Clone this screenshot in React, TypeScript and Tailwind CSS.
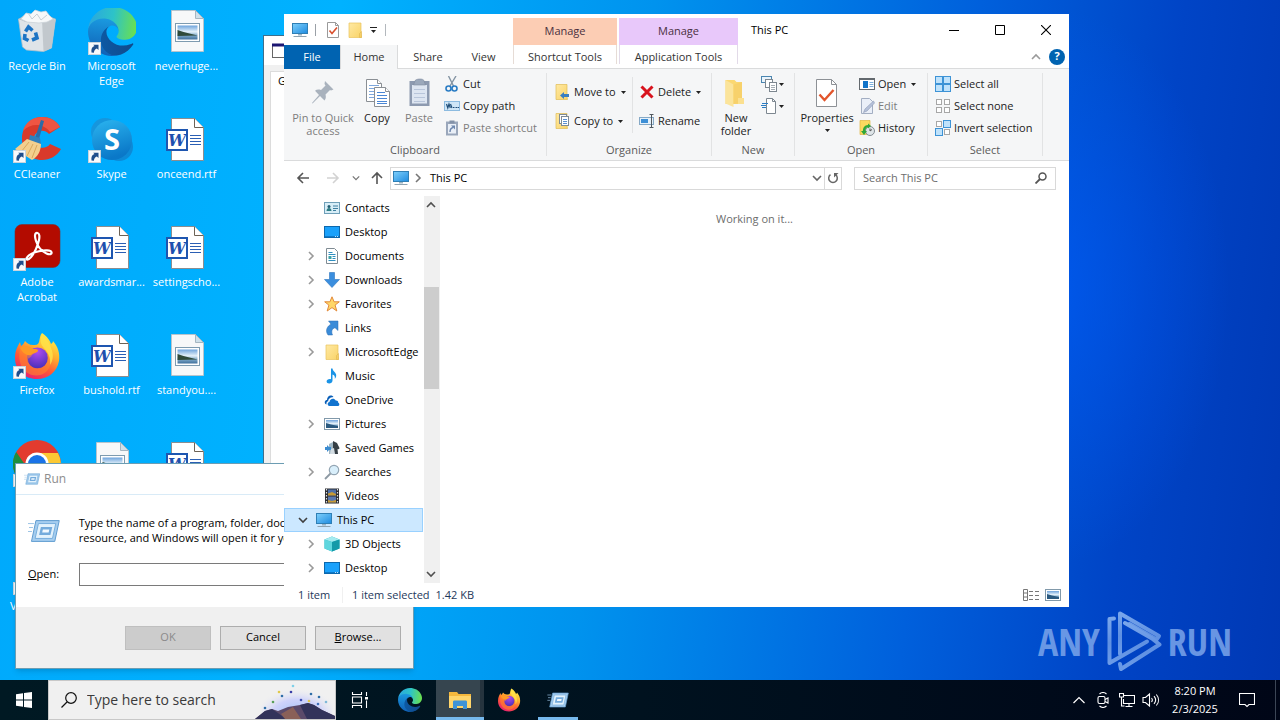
import type { ReactNode } from 'react';

type IconProps = { className?: string };

/* ---------- shared gradients ---------- */

function Gradients() {
  return (
    <svg className="absolute h-0 w-0" aria-hidden="true">
      <defs>
        <linearGradient id="edgeTop" x1="0" y1="0.4" x2="1" y2="0.5">
          <stop offset="0" stopColor="#2aa6e0" />
          <stop offset="0.5" stopColor="#2dc3c8" />
          <stop offset="1" stopColor="#6be04e" />
        </linearGradient>
        <linearGradient id="edgeMid" x1="0.5" y1="0" x2="0.4" y2="1">
          <stop offset="0" stopColor="#1b9de2" />
          <stop offset="1" stopColor="#0f5fb5" />
        </linearGradient>
        <linearGradient id="edgeLow" x1="0" y1="0.5" x2="1" y2="0.5">
          <stop offset="0" stopColor="#0c59a4" />
          <stop offset="1" stopColor="#114a8b" />
        </linearGradient>
        <linearGradient id="foxBody" x1="0.8" y1="0.05" x2="0.3" y2="1">
          <stop offset="0" stopColor="#fff04a" />
          <stop offset="0.35" stopColor="#ffb02e" />
          <stop offset="0.65" stopColor="#ff5a36" />
          <stop offset="1" stopColor="#e81f72" />
        </linearGradient>
        <radialGradient id="foxGlobe" cx="0.5" cy="0.2" r="0.8">
          <stop offset="0" stopColor="#b04bf0" />
          <stop offset="1" stopColor="#4a2fb8" />
        </radialGradient>
        <linearGradient id="screenBlue" x1="0" y1="0" x2="1" y2="1">
          <stop offset="0" stopColor="#7fd0fb" />
          <stop offset="1" stopColor="#1e8be0" />
        </linearGradient>
        <linearGradient id="skypeBlue" x1="0" y1="0" x2="0.3" y2="1">
          <stop offset="0" stopColor="#2bb5f0" />
          <stop offset="1" stopColor="#0a78c8" />
        </linearGradient>
        <linearGradient id="folderYellow" x1="0" y1="0" x2="1" y2="1">
          <stop offset="0" stopColor="#ffe9a3" />
          <stop offset="1" stopColor="#f9d367" />
        </linearGradient>
        <linearGradient id="photo" x1="0" y1="0" x2="0" y2="1">
          <stop offset="0" stopColor="#6ea3dc" />
          <stop offset="0.45" stopColor="#e4f1fa" />
          <stop offset="0.7" stopColor="#7fa9c9" />
          <stop offset="1" stopColor="#3f6f9c" />
        </linearGradient>
        <linearGradient id="markFade" x1="0" y1="0" x2="0" y2="1">
          <stop offset="0" stopColor="#8fb8f2" />
          <stop offset="0.55" stopColor="#6f9ee8" />
          <stop offset="1" stopColor="#7fabee" />
        </linearGradient>
        <radialGradient id="skyGlow" cx="0.5" cy="0.7" r="0.6">
          <stop offset="0" stopColor="#9fc0f5" />
          <stop offset="0.6" stopColor="#cfd3fa" />
          <stop offset="1" stopColor="#f0f0f0" stopOpacity="0" />
        </radialGradient>
      </defs>
    </svg>
  );
}

/* ---------- desktop icons ---------- */

function ShortcutArrow() {
  return (
    <g>
      <rect x="0.5" y="34.5" width="12" height="12" fill="#f7f9fb" stroke="#c9d4dd" />
      <path d="M3.500 44.500c-.6-3.600.8-5.900 3-6.400l-1.300-1.400h5.300v5.200l-1.600-1.500c-1.700.6-2.900 1.800-3 4.300z" fill="#1f4e8c" />
    </g>
  );
}

function RecycleBinIcon() {
  return (
    <svg viewBox="0 0 48 48" className="h-12 w-12">
      <path d="M5.500 11h37l-4 29-8 3.500-17-1.500-4-3z" fill="#dfe4e8" stroke="#b4bfc8" strokeWidth=".8" />
      <path d="M29 12h13.500l-4 28-8 3.500z" fill="#c2c8cd" />
      <path d="M5.500 11l7 3 16 1 14-4-8-4-22-.5z" fill="#b9c2c9" />
      <path d="M8 11l5-6 5 1 4-4 6 2 5-1 3 4 4 4-6 3-8 1-12-1z" fill="#f6f8f9" stroke="#cbd2d8" strokeWidth=".7" />
      <path d="M15 5l4 6 5-5 4 6 6-5" fill="none" stroke="#c7cfd5" />
      <g fill="none" stroke="#1c74c4" strokeWidth="3.600">
        <path d="M12.500 23.500l3-4.500 4 3.500" />
        <path d="M22.500 24.500l1.500 5.500-5 2" />
        <path d="M15.500 32.500l-4-2 .5-4.500" />
      </g>
    </svg>
  );
}

function EdgeShape() {
  return (
    <>
      <path fill="url(#edgeLow)" d="M231 190.500c-3.400 1.800-6.900 3.400-10.500 4.700-11.500 4.300-23.600 6.500-35.900 6.500-47.300 0-88.500-32.500-88.500-74.300.1-11.400 6.400-21.900 16.400-27.300-42.800 1.800-53.800 46.400-53.800 72.500 0 73.900 68.100 81.400 82.800 81.400 7.900 0 19.800-2.300 27-4.600l1.300-.4c27.600-9.500 51-28.100 66.600-52.800 1.200-1.900.6-4.300-1.200-5.500-1.300-.8-2.900-.9-4.200-.2z" />
      <path fill="url(#edgeMid)" d="M105.700 241.400c-8.900-5.500-16.600-12.800-22.700-21.300-26.300-36-18.400-86.500 17.600-112.800 3.800-2.700 7.700-5.200 11.900-7.200 3.100-1.500 8.400-4.100 15.500-4 10.100.1 19.600 4.900 25.700 13 4 5.400 6.300 11.900 6.400 18.700 0-.2 24.500-79.600-80-79.600-43.900 0-80 41.700-80 78.200-.2 19.300 4 38.500 12.100 56 27.600 58.800 94.800 87.600 156.400 67.100-21.100 6.600-44.100 3.700-62.900-8.100z" />
      <path fill="url(#edgeTop)" d="M152.300 148.900c-.8 1-3.300 2.500-3.300 5.700 0 2.600 1.700 5.100 4.700 7.200 14.400 10 41.500 8.700 41.600 8.700 10.700 0 21.100-2.900 30.300-8.300 18.800-11 30.400-31.100 30.400-52.900.3-22.400-8-37.300-11.300-43.900C223.500 23.900 177.700 0 128 0 58 0 1 56.200 0 126.200c.5-36.500 36.800-66 80-66 3.500 0 23.500.3 42 10.100 16.300 8.600 24.900 18.900 30.800 29.200 6.200 10.700 7.300 24.100 7.300 29.500 0 5.300-2.700 13.300-7.800 19.900z" />
    </>
  );
}

function EdgeDesktopIcon() {
  return (
    <svg viewBox="0 0 48 48" className="h-12 w-12">
      <svg x="0" y="-1" width="49" height="49" viewBox="0 0 256 256">
        <EdgeShape />
      </svg>
      <ShortcutArrow />
    </svg>
  );
}

function ImageFileIcon() {
  return (
    <svg viewBox="0 0 48 48" className="h-12 w-12">
      <path d="M8.500 2.500h24l8 8v33h-32z" fill="#f7f8f9" stroke="#b7c4cd" />
      <path d="M32.500 2.500v8h8z" fill="#cfe0ea" stroke="#a5b6c1" />
      <rect x="12.500" y="15.500" width="24" height="18" fill="#fff" stroke="#7e9bb0" />
      <rect x="14.500" y="17.500" width="20" height="14" fill="url(#photo)" />
      <path d="M14.500 22l6 2 14 3.500-20 .5z" fill="#2f4a3a" />
    </svg>
  );
}

function WordFileIcon() {
  return (
    <svg viewBox="0 0 48 48" className="h-12 w-12">
      <path d="M8.500 2.500h23l9 9v33h-32z" fill="#fff" stroke="#8b8d90" />
      <path d="M31.500 2.500v9h9" fill="#fff" stroke="#6c6256" />
      <path d="M27 19.500h11M27 22.500h11M27 25.500h11M27 28.500h11" stroke="#2b5fb4" />
      <rect x="4" y="14" width="20" height="20" fill="#fff" stroke="#1e56b0" strokeWidth="2" />
      <text x="14" y="30" textAnchor="middle" fontFamily="DejaVu Serif, Liberation Serif, serif" fontWeight="700" fontStyle="italic" fontSize="16" fill="#1e4fae">W</text>
    </svg>
  );
}

function CCleanerIcon() {
  return (
    <svg viewBox="0 0 48 48" className="h-12 w-12">
      <path d="M47 11C43 4 36 1 29 1 17 1 9 11 9 23c0 12 8 21 20 21 8 0 15-4 19-11l-11-5c-4 6-15 5-16-4-1-8 9-13 15-6z" fill="#d93a2b" />
      <path d="M47 11C43 4 36 1 29 1 19 1 12 7 10 15c8-8 20-8 27 1z" fill="#ef5543" />
      <path d="M28 4l3 1-5 18-4-1z" fill="#2c6ca8" />
      <path d="M17 19l10 3 1 7-12-4z" fill="#2f7fbc" />
      <path d="M14 23l14 5c0 6-3 13-9 16L2 33z" fill="#f3cf8e" />
      <path d="M16 26l-8 10M20 28l-6 12M24 29l-5 13" stroke="#d9a85c" />
      <ShortcutArrow />
    </svg>
  );
}

function SkypeIcon() {
  return (
    <svg viewBox="0 0 48 48" className="h-12 w-12">
      <circle cx="17" cy="16" r="14" fill="#1696dd" />
      <circle cx="31" cy="31" r="14" fill="#0d8ad6" />
      <circle cx="24" cy="24" r="20" fill="url(#skypeBlue)" />
      <text x="24" y="34" textAnchor="middle" fontFamily="Open Sans, Noto Sans, sans-serif" fontWeight="700" fontSize="29" fill="#fff">S</text>
      <ShortcutArrow />
    </svg>
  );
}

function AcrobatIcon() {
  return (
    <svg viewBox="0 0 48 48" className="h-12 w-12">
      <rect x="2" y="0.500" width="45" height="43" rx="7" fill="#b30b00" stroke="#7d2b2b" strokeWidth=".6" />
      <path d="M24.500 9c-3-.5-3 3.500-1.500 8 1.800 5.500 6 10.500 10.500 12.500 3.500 1.500 5.500.5 5-1.200-.7-2.400-7-2.300-12.500-1-5.500 1.200-11 4-12.300 6.700-.8 2 1.500 2.500 4-.6C21.500 29.500 25 21 26 16c.8-4 .3-6.700-1.500-7z" fill="none" stroke="#fff" strokeWidth="2.200" />
      <ShortcutArrow />
    </svg>
  );
}

function FirefoxShape() {
  return (
    <>
      <path d="M29 1c6 4 8 8 9 11 2-1 2-3 2-3 5 6 7 12 6 20-2 11-11 18-22 18C11 47 2 38 2 26 2 18 5 14 7 10l1 4c2-1 3-3 4-5 2 2 4 4 8 4 3 0 5 0 6-3 1-4 1-7 3-9z" fill="url(#foxBody)" />
      <circle cx="24.500" cy="26" r="10.500" fill="url(#foxGlobe)" />
      <path d="M7 17c5-4 10-2 13 0 3 0 5 1 5 2-1 2-4 2-6 4-1 3-4 3-4 4 0 6 5 10 11 9 7-1 10-7 8-14 4 4 4 10 2 14-4 8-15 10-23 4-6-5-8-14-6-23z" fill="#ff8a2a" fillOpacity=".55" />
      <path d="M7 16c5-4 10-1 13 1 3 0 5 0 5 2-2 2-5 2-7 4-3 1-7-1-9-4z" fill="#ff9a24" />
      <path d="M29 3c6 5 8 9 9 13 3 6 2 13-1 17 1-8-2-13-7-18-3-4-3-8-1-12z" fill="#ffe34a" fillOpacity=".8" />
    </>
  );
}

function FirefoxDesktopIcon() {
  return (
    <svg viewBox="0 0 48 48" className="h-12 w-12">
      <FirefoxShape />
      <ShortcutArrow />
    </svg>
  );
}

function ChromeIcon() {
  return (
    <svg viewBox="0 0 48 48" className="h-12 w-12">
      <circle cx="24" cy="24" r="24" fill="#e33b2e" />
      <path d="M24 24h24A24 24 0 0 1 22 48z" fill="#fcc934" />
      <path d="M45 13H24v11h24a24 24 0 0 0-3-11z" fill="#fcc934" />
      <path d="M3.200 12A24 24 0 0 0 24 48l9-19-18 0z" fill="#1e8e3e" />
      <circle cx="24" cy="24" r="11.500" fill="#fff" />
      <circle cx="24" cy="24" r="9" fill="#1a73e8" />
      <ShortcutArrow />
    </svg>
  );
}

function VlcIcon() {
  return (
    <svg viewBox="0 0 48 48" className="h-12 w-12">
      <path d="M21 4h6l10 32H11z" fill="#f58220" />
      <path d="M6 36h36l3 8H3z" fill="#f58220" />
      <ShortcutArrow />
    </svg>
  );
}

/* ---------- 16px icons ---------- */

function PcIcon({ className = 'h-4 w-4' }: IconProps) {
  return (
    <svg viewBox="0 0 16 16" className={className}>
      <rect x="0.500" y="1.500" width="15" height="10" fill="url(#screenBlue)" stroke="#2f7fb5" />
      <path d="M6 12h4v1.500H6z" fill="#9cb3c2" />
      <path d="M1.500 14.500h13" stroke="#8fa3b0" />
    </svg>
  );
}

function FolderIcon({ className = 'h-4 w-4' }: IconProps) {
  return (
    <svg viewBox="0 0 16 16" className={className}>
      <path d="M2 1h12v11l.5 3.500H2z" fill="url(#folderYellow)" stroke="#e9c35c" strokeWidth=".7" />
      <path d="M12.500 15.500v-4l2-2v6z" fill="#f5cf66" stroke="#dcb14a" strokeWidth=".5" />
    </svg>
  );
}

function CheckDocIcon({ className = 'h-4 w-4' }: IconProps) {
  return (
    <svg viewBox="0 0 16 16" className={className}>
      <path d="M2.500.5h8l3 3v12h-11z" fill="#fff" stroke="#9a9a9a" />
      <path d="M10.500.5v3h3" fill="none" stroke="#9a9a9a" />
      <path d="M4.500 8.500l2.500 3 5-6" fill="none" stroke="#d9502e" strokeWidth="1.600" />
    </svg>
  );
}

function DesktopIcon() {
  return (
    <svg viewBox="0 0 16 16" className="h-4 w-4">
      <rect x="0.500" y="2.500" width="15" height="11" fill="#1aa1fb" stroke="#0c68ad" />
      <path d="M1 12.500h14" stroke="#0d78c8" />
      <path d="M11 12.500h3" stroke="#bfe3fb" strokeDasharray="1 1" />
    </svg>
  );
}

function ContactsIcon() {
  return (
    <svg viewBox="0 0 16 16" className="h-4 w-4">
      <rect x="0.500" y="2.500" width="15" height="11" fill="#d7edf7" stroke="#6f9fb8" />
      <circle cx="5" cy="6.500" r="1.500" fill="#1f5d72" />
      <path d="M2.500 11c0-4 5-4 5 0z" fill="#2d7d83" />
      <path d="M9 6h5M9 8.500h5M9 10.500h3" stroke="#3f7fa0" />
    </svg>
  );
}

function DocumentsIcon() {
  return (
    <svg viewBox="0 0 16 16" className="h-4 w-4">
      <path d="M2.500.5h8l3 3v12h-11z" fill="#fff" stroke="#7f8b93" />
      <path d="M4.500 4.500h4M4.500 6.500h7M4.500 12.500h7M8.500 8.500h3M8.500 10.500h3" stroke="#2f8fc0" />
      <path d="M4.500 8h3v3h-3z" fill="#3aa3a8" />
    </svg>
  );
}

function DownloadsIcon() {
  return (
    <svg viewBox="0 0 16 16" className="h-4 w-4">
      <path d="M5.500.5h5v7h5L8 15.500.5 7.500h5z" fill="#3b8ede" stroke="#2c76c0" strokeWidth=".6" />
    </svg>
  );
}

function StarIcon() {
  return (
    <svg viewBox="0 0 16 16" className="h-4 w-4">
      <path d="M8 .8l2.100 5h5.200l-4.200 3.300 1.700 5.900L8 11.600 3.200 15l1.700-5.900L.7 5.800h5.200z" fill="#ffd768" stroke="#e2893a" />
    </svg>
  );
}

function LinksIcon() {
  return (
    <svg viewBox="0 0 16 16" className="h-4 w-4">
      <path d="M4.500 1h9.500v9.500l-3-2.800c-3 1-4 3.300-2.500 7.300H4C.8 10.500 3.300 6 7 4.200z" fill="#3a8bd8" stroke="#2a6fb4" strokeWidth=".5" />
    </svg>
  );
}

function MusicIcon() {
  return (
    <svg viewBox="0 0 16 16" className="h-4 w-4">
      <path d="M7 .5h1.500c.3 3 4 4 3.700 7.200-.1 1.400-.7 2.300-1.400 3 .5-2.500-.8-3.800-2.300-4.200v6c0 2-1.600 3-3.300 3-1.500 0-2.600-.8-2.600-2 0-1.700 2.100-2.900 4.400-2.300z" fill="#1a93e6" />
    </svg>
  );
}

function OneDriveIcon() {
  return (
    <svg viewBox="0 0 16 16" className="h-4 w-4">
      <path d="M1.500 12c-1.500-1.500-.5-4 1.500-4C3 4 7 2 9.500 5c-4 0-5.500 3-5.200 4.200C2.800 9.500 2.200 10.500 2.500 12.500z" fill="#0a5fb8" />
      <path d="M5.500 14c-2.300 0-2.500-3.800 0-4 0-3.500 4.700-4.600 6.200-1.600 2-.2 2.800 1.300 2.500 2.300 1.700.5 1.500 3.300-.4 3.300z" fill="#1173cf" />
    </svg>
  );
}

function PicturesIcon() {
  return (
    <svg viewBox="0 0 16 16" className="h-4 w-4">
      <rect x="0.500" y="2.500" width="15" height="11" fill="#fff" stroke="#8199aa" />
      <rect x="2" y="4" width="12" height="8" fill="url(#photo)" />
      <path d="M2 7l5 1.500 7 1.500v2H2z" fill="#2b5a80" />
    </svg>
  );
}

function SavedGamesIcon() {
  return (
    <svg viewBox="0 0 16 16" className="h-4 w-4">
      <path d="M9 1l4 2 2.500 5c0 1-1 1.500-2 1l.5 5H9z" fill="#363f45" />
      <path d="M5 4l4-2v12H5z" fill="#9fb6c4" />
      <path d="M1 7h2V5l2 2h2v3H5l-2 2v-2H1z" fill="#3c8cd0" />
      <path d="M6 14l1-5 3-1 1 6z" fill="#d4dde3" />
    </svg>
  );
}

function SearchesIcon() {
  return (
    <svg viewBox="0 0 16 16" className="h-4 w-4">
      <circle cx="10" cy="6" r="4.700" fill="#d9effb" stroke="#93a5b3" strokeWidth="1.200" />
      <path d="M6.500 9.500L1 15" stroke="#8d99a3" strokeWidth="1.800" />
    </svg>
  );
}

function VideosIcon() {
  return (
    <svg viewBox="0 0 16 16" className="h-4 w-4">
      <rect x="1" y="0.500" width="14" height="15" fill="#2b2c31" />
      <rect x="4" y="1.500" width="8" height="6" fill="#4e6fa8" />
      <rect x="4" y="8.500" width="8" height="6" fill="#5a78b0" />
      <path d="M4 5.500l4-1.500 4 2v1.500H4zM4 12l4 1 4-1v2.500H4z" fill="#c69a35" />
      <path d="M2.500 1v14M13.500 1v14" stroke="#dcdfe3" strokeWidth="1.200" strokeDasharray="1.500 1.500" />
    </svg>
  );
}

function CubeIcon() {
  return (
    <svg viewBox="0 0 16 16" className="h-4 w-4">
      <path d="M8 .5l7.500 3v9L8 15.500.5 12.500v-9z" fill="#2bb4c0" />
      <path d="M8 .5l7.500 3L8 6 .5 3.500z" fill="#a5ebf0" />
      <path d="M.5 3.500L8 6v9.500L.5 12.500z" fill="#5fd6de" />
      <path d="M8 6v9.500l7.500-3v-9z" fill="#159aa9" />
    </svg>
  );
}

function RunIcon({ className = 'h-4 w-4' }: IconProps) {
  return (
    <svg viewBox="0 0 32 24" className={className}>
      <path d="M8 1.500h23.500L27 22.500H3.500z" fill="#a5cdef" stroke="#5f9ccf" />
      <path d="M10.500 4.500h17.500l-3.300 15H7.200z" fill="#e3f2fc" stroke="#76aedd" />
      <path d="M13 8h11.500l-1.900 8H11.200z" fill="#74abdc" />
      <path d="M15 10.500h6.500l-.7 3h-6.500z" fill="#f2f9ff" />
      <path d="M0 4.500h6M1 8.500h4M0 12.500h4" stroke="#9cc4e6" />
    </svg>
  );
}

/* ---------- ribbon icons ---------- */

function PinIcon() {
  return (
    <svg viewBox="0 0 32 32" className="h-8 w-8">
      <path d="M18 3l8.500 8.500-2.500 1-1-.5-4.500 4.500c.7 2.500.3 4.500-1 6l-4.500-4.500L5.500 25.500 5 25l7-8-4-4.200c1.500-1.300 3.500-1.500 6-.8L18.500 7.500 17.500 6z" fill="#a9b2bd" />
    </svg>
  );
}

function CopyPagesIcon() {
  return (
    <svg viewBox="0 0 32 32" className="h-8 w-8">
      <g fill="#fff" stroke="#8a8f94">
        <path d="M5.500 1.500h11l4 4v18h-15z" />
        <path d="M16.500 1.500v4h4" />
      </g>
      <path d="M8 7.500h10M8 10.500h8M8 13.500h6M8 16.500h6M8 19.500h6" stroke="#7ea7dd" />
      <g fill="#fff" stroke="#8a8f94">
        <path d="M13.500 9.500h11l4 4v15h-15z" />
        <path d="M24.500 9.500v4h4" />
      </g>
      <path d="M16 14.500h8M16 17.500h10M16 20.500h10M16 23.500h10M16 25.500h10" stroke="#4a86d4" />
    </svg>
  );
}

function PasteIcon() {
  return (
    <svg viewBox="0 0 32 32" className="h-8 w-8">
      <rect x="6.500" y="3" width="20" height="25" fill="#8d9ab0" />
      <rect x="9" y="7" width="15" height="18.500" fill="#dde5f1" />
      <path d="M12 3c0-1.500 3-2 5-2s4 .5 4 2l1.500 4h-12z" fill="#9ba8bb" stroke="#7f8b9f" strokeWidth=".6" />
      <path d="M11 11.500h11M11 15.500h11M11 19.500h11M11 23.500h11" stroke="#b8c5da" />
    </svg>
  );
}

function CutIcon() {
  return (
    <svg viewBox="0 0 16 16" className="h-4 w-4">
      <path d="M4.500 0l5 10M12 0L6 10" stroke="#8494a3" strokeWidth="1.400" />
      <circle cx="4.500" cy="12.500" r="2.500" fill="none" stroke="#2a7cc4" strokeWidth="1.600" />
      <circle cx="10.500" cy="12.500" r="2.500" fill="none" stroke="#2a7cc4" strokeWidth="1.600" />
    </svg>
  );
}

function CopyPathIcon() {
  return (
    <svg viewBox="0 0 16 16" className="h-4 w-4">
      <rect x="0.500" y="3.500" width="15" height="9" fill="#cfe6f7" stroke="#8cbbe0" />
      <path d="M2.500 6l1.300 4L5 6l1.300 4M6.500 6L8 10" fill="none" stroke="#1f4e79" strokeWidth="1.200" />
      <path d="M9 9.500h1.500M11.500 9.500H13M13.500 9.500H15" stroke="#1f4e79" />
    </svg>
  );
}

function PasteShortcutIcon() {
  return (
    <svg viewBox="0 0 16 16" className="h-4 w-4">
      <rect x="2" y="1.500" width="12" height="14" fill="#9aa7bb" />
      <rect x="4" y="4" width="8" height="9.500" fill="#e9eff7" />
      <rect x="5.500" y="0.500" width="5" height="3" fill="#8392a8" />
      <path d="M6 12c0-3 1-4 3-4.500" fill="none" stroke="#6d87ae" strokeWidth="1.400" />
      <path d="M7 5.500h4v4z" fill="#6d87ae" />
    </svg>
  );
}

function MoveToIcon() {
  return (
    <svg viewBox="0 0 16 16" className="h-4 w-4">
      <path d="M1 .5h11v12l.5 3H1z" fill="url(#folderYellow)" stroke="#e0bb55" strokeWidth=".7" />
      <path d="M5 11.500l4-3.500v2h5v3H9v2z" fill="#3a7ec0" />
    </svg>
  );
}

function CopyToIcon() {
  return (
    <svg viewBox="0 0 16 16" className="h-4 w-4">
      <path d="M1 .5h11v12l.5 3H1z" fill="url(#folderYellow)" stroke="#e0bb55" strokeWidth=".7" />
      <rect x="4.500" y="1.500" width="7" height="9" fill="#fff" stroke="#7f8b95" />
      <rect x="6.500" y="3.500" width="7" height="9" fill="#fff" stroke="#7f8b95" />
      <path d="M8 6.500h4M8 8.500h4M8 10.500h4" stroke="#5a90d0" />
    </svg>
  );
}

function DeleteIcon() {
  return (
    <svg viewBox="0 0 16 16" className="h-4 w-4">
      <path d="M2.500 2.500l11 11M13.500 2.500l-11 11" stroke="#d8131d" strokeWidth="3" />
    </svg>
  );
}

function RenameIcon() {
  return (
    <svg viewBox="0 0 16 16" className="h-4 w-4">
      <rect x="0.500" y="4.500" width="14" height="7" fill="#e6f1fa" stroke="#86a9c6" />
      <rect x="2" y="6" width="7" height="4" fill="#3d8fd6" />
      <path d="M12.500 2v12M10.500 1.500h4M10.500 14.500h4" stroke="#50585f" />
    </svg>
  );
}

function NewFolderIcon() {
  return (
    <svg viewBox="0 0 32 32" className="h-8 w-8">
      <path d="M5.500 2h9l2 2H22v22H5.500z" fill="#fbd872" />
      <path d="M5.500 2l8 4.500V29l-8-3.500z" fill="#fbe49b" />
      <path d="M13.500 6.500L22 4v21l-8.500 1z" fill="#f7d16b" />
      <path d="M18 20h6v6h-6z" fill="#fbe090" />
    </svg>
  );
}

function NewItemIcon() {
  return (
    <svg viewBox="0 0 16 16" className="h-4 w-4">
      <rect x="0.500" y="0.500" width="10" height="6" fill="#eaf4fc" stroke="#4b86b0" />
      <rect x="4.500" y="3.500" width="7" height="8" fill="#fff" stroke="#7d8790" />
      <rect x="8.500" y="6.500" width="7" height="9" fill="#fff" stroke="#7d8790" />
      <path d="M10 9.500h4M10 11.500h4M10 13.500h4" stroke="#a5adb4" />
    </svg>
  );
}

function EasyAccessIcon() {
  return (
    <svg viewBox="0 0 16 16" className="h-4 w-4">
      <path d="M5.500.5h6l3 3v12h-9z" fill="#fff" stroke="#7d8790" />
      <path d="M11.500.5v3h3" fill="none" stroke="#7d8790" />
      <path d="M1 5.500h6M0 7.500h5M1 9.500h4" stroke="#2a7cc4" />
    </svg>
  );
}

function PropertiesIcon() {
  return (
    <svg viewBox="0 0 32 32" className="h-8 w-8">
      <path d="M5.500 1.500h15l5 5v22h-20z" fill="#fff" stroke="#8d9196" />
      <path d="M20.500 1.500v5h5" fill="none" stroke="#8d9196" />
      <path d="M8.500 16.500l5 5.500 9-10" fill="none" stroke="#e2552c" strokeWidth="2.400" />
    </svg>
  );
}

function OpenIcon() {
  return (
    <svg viewBox="0 0 16 16" className="h-4 w-4">
      <rect x="0.500" y="2.500" width="15" height="11" fill="#fff" stroke="#63696e" />
      <path d="M0 3h16" stroke="#63696e" strokeWidth="2" />
      <rect x="4" y="5" width="5" height="7" fill="#1274c9" />
      <path d="M10.500 6.500h4M10.500 8.500h4M10.500 10.500h4" stroke="#7db0dc" />
    </svg>
  );
}

function EditIcon() {
  return (
    <svg viewBox="0 0 16 16" className="h-4 w-4">
      <path d="M2.500.5h8l3 3v12h-11z" fill="#eaeff8" stroke="#a3aec2" />
      <path d="M14.500 3L6 11l-1.500 3.500L8 13l7.500-8z" fill="#b5c1da" stroke="#8e9bb5" strokeWidth=".6" />
    </svg>
  );
}

function HistoryIcon() {
  return (
    <svg viewBox="0 0 16 16" className="h-4 w-4">
      <path d="M1 .5h10v14H1z" fill="#fbd95f" stroke="#dfb63f" strokeWidth=".7" />
      <circle cx="11" cy="11" r="4.500" fill="#dfe5e8" stroke="#848c92" />
      <path d="M11 8.500V11l2-1.500" fill="none" stroke="#555" />
      <path d="M4 12c-.5-4 1.500-7 5-7V3.500L12 6 9 8.500V7.200C7 7.200 6 9 6.500 12.500z" fill="#2fa83a" />
      <path d="M2 11h6l-3 4z" fill="#2fa83a" />
    </svg>
  );
}

function TileSquares({ filled }: { filled: boolean[] }) {
  const spots = [
    [0.5, 0.5],
    [8.5, 0.5],
    [0.5, 8.5],
    [8.5, 8.5],
  ];
  return (
    <svg viewBox="0 0 16 16" className="h-4 w-4">
      {spots.map(([x, y], i) =>
        filled[i] ? (
          <rect key={i} x={x} y={y} width="7" height="7" fill="#bfe2fb" stroke="#3d93d6" />
        ) : (
          <rect key={i} x={x + 1} y={y + 1} width="5" height="5" fill="#fff" stroke="#a7a7a7" />
        ),
      )}
    </svg>
  );
}

function Caret() {
  return (
    <svg viewBox="0 0 5 3" className="h-[3px] w-[5px] shrink-0">
      <path d="M0 0h5L2.500 3z" fill="#222" />
    </svg>
  );
}

function Chevron({ dir, className = 'h-2.5 w-2.5', stroke = '#9a9a9a' }: { dir: 'right' | 'down' | 'up'; className?: string; stroke?: string }) {
  const d = dir === 'right' ? 'M3 1l4 4-4 4' : dir === 'down' ? 'M1 3l4 4 4-4' : 'M1 7l4-4 4 4';
  return (
    <svg viewBox="0 0 10 10" className={className}>
      <path d={d} fill="none" stroke={stroke} strokeWidth="1.600" />
    </svg>
  );
}

/* ---------- desktop ---------- */

const desktopItems: { label: string; icon: ReactNode }[] = [
  { label: 'Recycle Bin', icon: <RecycleBinIcon /> },
  { label: 'Microsoft Edge', icon: <EdgeDesktopIcon /> },
  { label: 'neverhuge...', icon: <ImageFileIcon /> },
  { label: 'CCleaner', icon: <CCleanerIcon /> },
  { label: 'Skype', icon: <SkypeIcon /> },
  { label: 'onceend.rtf', icon: <WordFileIcon /> },
  { label: 'Adobe Acrobat', icon: <AcrobatIcon /> },
  { label: 'awardsmar...', icon: <WordFileIcon /> },
  { label: 'settingscho...', icon: <WordFileIcon /> },
  { label: 'Firefox', icon: <FirefoxDesktopIcon /> },
  { label: 'bushold.rtf', icon: <WordFileIcon /> },
  { label: 'standyou....', icon: <ImageFileIcon /> },
  { label: 'Google Chrome', icon: <ChromeIcon /> },
  { label: 'openarea.jpg', icon: <ImageFileIcon /> },
  { label: 'partner.rtf', icon: <WordFileIcon /> },
  { label: 'VLC media player', icon: <VlcIcon /> },
];

function DesktopGrid() {
  return (
    <div className="grid w-fit auto-rows-[108px] grid-cols-[74px_75px_75px]">
      {desktopItems.map((item) => (
        <button key={item.label} className="flex flex-col items-center gap-0.5 pt-2 text-[11px] leading-[15px] text-white">
          {item.icon}
          <span className="px-1.5">{item.label}</span>
        </button>
      ))}
    </div>
  );
}

function Watermark() {
  return (
    <div className="absolute right-12 bottom-2 flex items-center gap-1.5 text-[#7ba5ea] opacity-85">
      <span className="font-['Open_Sans_Condensed','Open_Sans','Liberation_Sans',sans-serif] text-[38px] leading-none font-light font-stretch-condensed">ANY</span>
      <svg viewBox="0 0 56 62" className="h-[62px] w-14" fill="none" stroke="url(#markFade)" strokeWidth="4" strokeLinejoin="round" strokeLinecap="round">
        <path d="M14 44V3.500L53 26l-2.500 3.500-27-15.500" />
        <path d="M8 8.500L3.500 9v44L41 31.500" />
        <path d="M14 54l1 5L53.500 34.500 46 28.500 19 13" />
      </svg>
      <span className="font-['Open_Sans_Condensed','Open_Sans','Liberation_Sans',sans-serif] text-[38px] leading-none font-light font-stretch-condensed">RUN</span>
    </div>
  );
}

function BackWindow() {
  return (
    <section aria-label="Properties" className="absolute top-[35px] left-[263px] flex h-[560px] w-[400px] flex-col border border-[#3d6f8c] bg-[#f0f0f0]">
      <header className="flex h-[29px] shrink-0 items-center bg-white px-2">
        <svg viewBox="0 0 16 16" className="h-4 w-4">
          <rect x="0.500" y="1.500" width="15" height="13" fill="#fff" stroke="#666" />
          <path d="M0 2h16" stroke="#1c1672" strokeWidth="3" />
        </svg>
      </header>
      <div className="m-1.5 flex-1 border border-[#dcdcdc] bg-white px-[7px] text-[11px] leading-[18px] text-black">General</div>
    </section>
  );
}

function RunDialog() {
  const button = 'h-6 w-[86px] border border-[#adadad] bg-[#e1e1e1]';
  return (
    <section aria-label="Run" className="absolute top-[463px] left-[15px] flex w-[399px] flex-col border border-[#6c9db3] bg-white text-[11px] text-black shadow-md">
      <header className="flex h-[31px] items-center gap-1 border-b border-[#d9ebf7] px-2 text-xs text-[#8d8d8d]">
        <RunIcon className="h-3 w-4" />
        <span>Run</span>
      </header>
      <div className="flex h-[112px] flex-col px-3 pt-5">
        <div className="flex gap-[19px]">
          <RunIcon className="mt-1 h-6 w-8" />
          <p className="w-[325px] leading-[15px]">
            Type the name of a program, folder, document, or Internet resource, and Windows will open it for you.
          </p>
        </div>
        <div className="mt-[18px] flex items-center">
          <label htmlFor="run-open" className="w-[51px]">
            <u>O</u>pen:
          </label>
          <input id="run-open" className="h-[23px] flex-1 border border-[#7a7a7a] bg-white px-1" />
        </div>
      </div>
      <footer className="flex h-[61px] items-center justify-end gap-[9px] bg-[#f0f0f0] px-3">
        <button disabled className="h-6 w-[86px] border border-[#bfbfbf] bg-[#cccccc] text-[#8a8a8a]">OK</button>
        <button className={button}>Cancel</button>
        <button className={button}>
          <u>B</u>rowse...
        </button>
      </footer>
    </section>
  );
}

/* ---------- explorer ---------- */

function ContextTitle({ className, children }: { className: string; children: ReactNode }) {
  return <div className={`mt-1 flex items-center justify-center text-[#4a3040] ${className}`}>{children}</div>;
}

function TitleBar() {
  return (
    <header className="flex h-[31px] shrink-0 text-[11px]">
      <div className="flex w-[229px] items-center pl-2 [&>svg]:shrink-0">
        <PcIcon />
        <span className="ml-[7px] h-3 w-px bg-[#9aa0a6]" />
        <button aria-label="Properties" className="ml-[9px]"><CheckDocIcon /></button>
        <button aria-label="New folder" className="ml-1.5"><FolderIcon /></button>
        <button aria-label="Customize toolbar" className="ml-[7px] flex flex-col items-center gap-0.5">
          <span className="h-px w-[7px] bg-[#222]" />
          <Caret />
        </button>
        <span className="ml-2 h-3 w-px bg-[#b3b8bd]" />
      </div>
      <ContextTitle className="w-[104px] bg-[#fccdb4]">Manage</ContextTitle>
      <ContextTitle className="ml-0.5 w-[119px] bg-[#e8c8fa]">Manage</ContextTitle>
      <h1 className="flex-1 pl-[13px] leading-[31px] text-black">This PC</h1>
      <div className="flex">
        <button aria-label="Minimize" className="flex w-[46px] items-center justify-center">
          <svg viewBox="0 0 10 10" className="h-2.5 w-2.5"><path d="M0 5.500h10" stroke="#000" /></svg>
        </button>
        <button aria-label="Maximize" className="flex w-[46px] items-center justify-center">
          <svg viewBox="0 0 10 10" className="h-2.5 w-2.5"><path d="M.5.5h9v9h-9z" fill="none" stroke="#000" /></svg>
        </button>
        <button aria-label="Close" className="flex w-[46px] items-center justify-center">
          <svg viewBox="0 0 10 10" className="h-2.5 w-2.5"><path d="M0 0l10 10M10 0L0 10" stroke="#000" strokeWidth="1.100" /></svg>
        </button>
      </div>
    </header>
  );
}

function TabRow() {
  return (
    <nav className="flex h-6 shrink-0 border-b border-[#dadbdc] text-[11px] text-[#333]">
      <button className="-mb-px w-14 bg-[#0063b1] text-white">File</button>
      <button className="-mb-px w-[58px] border-x border-[#dadbdc] bg-[#f5f6f7]">Home</button>
      <button className="w-[60px] pt-px">Share</button>
      <button className="w-[55px] pt-px pr-1">View</button>
      <button className="mb-1 w-[104px] border-x border-[#e6dcd6] pt-1">Shortcut Tools</button>
      <button className="mb-1 ml-0.5 w-[119px] border-x border-[#e2dae8] pt-1">Application Tools</button>
      <div className="ml-auto flex items-center gap-2 pr-1">
        <button aria-label="Minimize the Ribbon"><Chevron dir="up" /></button>
        <button aria-label="Help" className="flex h-4 w-4 items-center justify-center rounded-full bg-[#0063b1] font-bold text-white">?</button>
      </div>
    </nav>
  );
}

function RibbonGroup({ label, className, children }: { label: string; className: string; children: ReactNode }) {
  return (
    <section className={`flex shrink-0 flex-col border-r border-[#e2e3e4] ${className}`}>
      <div className="flex min-h-0 flex-1">{children}</div>
      <h2 className="h-3 text-center leading-3 text-[#5a5a5a]">{label}</h2>
    </section>
  );
}

function BigButton({ icon, label, caret, disabled, className }: { icon: ReactNode; label: string; caret?: boolean; disabled?: boolean; className: string }) {
  return (
    <button disabled={disabled} className={`flex flex-col items-center justify-start gap-px pt-[5px] leading-[13px] disabled:text-[#7d7d7d] ${className}`}>
      {icon}
      <span>{label}</span>
      {caret && <span className="pt-1"><Caret /></span>}
    </button>
  );
}

function SmallButton({ icon, label, caret, disabled }: { icon: ReactNode; label: string; caret?: boolean; disabled?: boolean }) {
  return (
    <button disabled={disabled} className="flex h-[22px] items-center gap-[3px] whitespace-nowrap disabled:text-[#7d7d7d]">
      {icon}
      <span>{label}</span>
      {caret && <span className="pl-0.5"><Caret /></span>}
    </button>
  );
}

function Ribbon() {
  return (
    <div className="flex h-[92px] shrink-0 overflow-hidden border-b border-[#dadbdc] bg-[#f5f6f7] py-1 text-[11px] text-[#222]">
      <RibbonGroup label="Clipboard" className="w-[263px]">
        <BigButton disabled icon={<PinIcon />} label="Pin to Quick access" className="ml-1 w-[70px]" />
        <BigButton icon={<CopyPagesIcon />} label="Copy" className="w-[38px]" />
        <BigButton disabled icon={<PasteIcon />} label="Paste" className="w-[46px]" />
        <div className="ml-0.5 flex flex-col">
          <SmallButton icon={<CutIcon />} label="Cut" />
          <SmallButton icon={<CopyPathIcon />} label="Copy path" />
          <SmallButton disabled icon={<PasteShortcutIcon />} label="Paste shortcut" />
        </div>
      </RibbonGroup>
      <RibbonGroup label="Organize" className="w-[165px]">
        <div className="ml-2 flex w-[77px] flex-col gap-[7px] pt-2">
          <SmallButton icon={<MoveToIcon />} label="Move to" caret />
          <SmallButton icon={<CopyToIcon />} label="Copy to" caret />
        </div>
        <div className="mt-1 h-14 w-px bg-[#e2e3e4]" />
        <div className="ml-1.5 flex flex-col gap-[7px] pt-2">
          <SmallButton icon={<DeleteIcon />} label="Delete" caret />
          <SmallButton icon={<RenameIcon />} label="Rename" />
        </div>
      </RibbonGroup>
      <RibbonGroup label="New" className="w-[83px]">
        <BigButton icon={<NewFolderIcon />} label="New folder" className="ml-1 w-10" />
        <div className="ml-[5px] flex flex-col">
          <button aria-label="New item" className="flex h-[22px] items-center gap-0.5"><NewItemIcon /><Caret /></button>
          <button aria-label="Easy access" className="flex h-[22px] items-center gap-0.5"><EasyAccessIcon /><Caret /></button>
        </div>
      </RibbonGroup>
      <RibbonGroup label="Open" className="w-[133px]">
        <BigButton icon={<PropertiesIcon />} label="Properties" caret className="ml-1 w-[56px]" />
        <div className="ml-1 flex flex-col">
          <SmallButton icon={<OpenIcon />} label="Open" caret />
          <SmallButton disabled icon={<EditIcon />} label="Edit" />
          <SmallButton icon={<HistoryIcon />} label="History" />
        </div>
      </RibbonGroup>
      <RibbonGroup label="Select" className="w-[115px]">
        <div className="ml-[7px] flex flex-col">
          <SmallButton icon={<TileSquares filled={[true, true, true, true]} />} label="Select all" />
          <SmallButton icon={<TileSquares filled={[false, false, false, false]} />} label="Select none" />
          <SmallButton icon={<TileSquares filled={[false, true, true, false]} />} label="Invert selection" />
        </div>
      </RibbonGroup>
    </div>
  );
}

function AddressRow() {
  return (
    <div className="flex h-[35px] shrink-0 items-center pr-[13px] pb-px pl-3 text-[11px]">
      <button aria-label="Back" className="w-[14px]">
        <svg viewBox="0 0 14 14" className="h-3.5 w-3.5"><path d="M13 7H2M7 2L2 7l5 5" fill="none" stroke="#555" strokeWidth="1.600" /></svg>
      </button>
      <button aria-label="Forward" className="ml-4 w-[14px]">
        <svg viewBox="0 0 14 14" className="h-3.5 w-3.5"><path d="M1 7h11M7 2l5 5-5 5" fill="none" stroke="#d2d2d2" strokeWidth="1.600" /></svg>
      </button>
      <button aria-label="Recent locations" className="ml-3"><Chevron dir="down" className="h-2 w-2" stroke="#777" /></button>
      <button aria-label="Up" className="ml-2.5 w-[14px]">
        <svg viewBox="0 0 14 14" className="h-3.5 w-3.5"><path d="M7 13V2M2 7l5-5 5 5" fill="none" stroke="#555" strokeWidth="1.600" /></svg>
      </button>
      <div className="ml-1.5 flex h-[23px] flex-1 items-center border border-[#d9d9d9] pl-0.5">
        <PcIcon />
        <Chevron dir="right" className="ml-1 h-2.5 w-2.5" stroke="#777" />
        <span className="ml-[7px] flex-1 text-black">This PC</span>
        <button aria-label="Previous locations" className="px-0.5"><Chevron dir="down" stroke="#666" /></button>
        <button aria-label="Refresh" className="flex h-full w-[17px] items-center justify-center border-l border-[#d9d9d9]">
          <svg viewBox="0 0 12 12" className="h-3 w-3">
            <path d="M3.500 2.700A4.300 4.300 0 1 0 8.500 2.700" fill="none" stroke="#666" strokeWidth="1.500" />
            <path d="M7 1h4.500L7 5.500z" fill="#666" />
          </svg>
        </button>
      </div>
      <label className="ml-3 flex h-[23px] w-[202px] items-center border border-[#d9d9d9] pr-2 pl-2">
        <input aria-label="Search This PC" placeholder="Search This PC" className="min-w-0 flex-1 bg-transparent outline-none placeholder:text-[#6d6d6d]" />
        <svg viewBox="0 0 12 12" className="h-3 w-3">
          <circle cx="7.500" cy="4.500" r="3.500" fill="none" stroke="#555" strokeWidth="1.500" />
          <path d="M5 7l-4.500 4.500" stroke="#555" strokeWidth="1.800" />
        </svg>
      </label>
    </div>
  );
}

const navItems: { label: string; icon: ReactNode; expandable?: boolean; root?: boolean }[] = [
  { label: 'Contacts', icon: <ContactsIcon /> },
  { label: 'Desktop', icon: <DesktopIcon /> },
  { label: 'Documents', icon: <DocumentsIcon />, expandable: true },
  { label: 'Downloads', icon: <DownloadsIcon />, expandable: true },
  { label: 'Favorites', icon: <StarIcon />, expandable: true },
  { label: 'Links', icon: <LinksIcon /> },
  { label: 'MicrosoftEdge', icon: <FolderIcon />, expandable: true },
  { label: 'Music', icon: <MusicIcon /> },
  { label: 'OneDrive', icon: <OneDriveIcon /> },
  { label: 'Pictures', icon: <PicturesIcon />, expandable: true },
  { label: 'Saved Games', icon: <SavedGamesIcon /> },
  { label: 'Searches', icon: <SearchesIcon />, expandable: true },
  { label: 'Videos', icon: <VideosIcon /> },
  { label: 'This PC', icon: <PcIcon />, root: true },
  { label: '3D Objects', icon: <CubeIcon />, expandable: true },
  { label: 'Desktop', icon: <DesktopIcon />, expandable: true },
];

function NavPane() {
  return (
    <ul className="w-[139px] shrink-0 overflow-hidden text-[11px] text-black">
      {navItems.map((item, i) => (
        <li key={i}>
          <button
            className={
              item.root
                ? 'flex h-6 w-full items-center border border-[#99d1ff] bg-[#cce8ff] pl-[13px] whitespace-nowrap'
                : 'flex h-6 w-full items-center pl-[22px] whitespace-nowrap'
            }
          >
            <span className="flex w-[18px] shrink-0">
              {item.root && <Chevron dir="down" stroke="#404040" />}
              {item.expandable && <Chevron dir="right" />}
            </span>
            <span className="shrink-0">{item.icon}</span>
            <span className="pl-[5px]">{item.label}</span>
          </button>
        </li>
      ))}
    </ul>
  );
}

function ScrollTrack() {
  return (
    <div className="ml-px flex w-4 shrink-0 flex-col bg-[#f0f0f0]">
      <button aria-label="Scroll up" className="flex h-[18px] items-center justify-center pr-0.5"><Chevron dir="up" stroke="#505050" /></button>
      <div className="grow-[73]" />
      <div className="w-[15px] grow-[102] bg-[#cdcdcd]" />
      <div className="grow-[176]" />
      <button aria-label="Scroll down" className="flex h-[18px] items-center justify-center pr-0.5"><Chevron dir="down" stroke="#505050" /></button>
    </div>
  );
}

function StatusBar() {
  return (
    <footer className="flex h-6 shrink-0 items-center pr-2 pl-[14px] text-[11px] text-[#1e395b]">
      <span className="w-[44px]">1 item</span>
      <span className="h-4 w-px bg-[#f0f0f0]" />
      <span className="pl-[9px]">1 item selected</span>
      <span className="flex-1 pl-1.5">1.42 KB</span>
      <button aria-label="Details view" className="mr-1.5">
        <svg viewBox="0 0 16 16" className="h-4 w-4">
          <path d="M.5 2.500h4v11h-4zM.5 6h4M.5 10h4" fill="#fff" stroke="#777" />
          <path d="M6 4.500h4M12 4.500h4M6 8.500h4M12 8.500h4M6 12.500h4M12 12.500h4" stroke="#777" />
        </svg>
      </button>
      <button aria-label="Large icons view"><PicturesIcon /></button>
    </footer>
  );
}

function ExplorerWindow() {
  return (
    <section aria-label="This PC" className="absolute top-[14px] right-[211px] bottom-[73px] left-[284px] flex flex-col overflow-hidden bg-white">
      <TitleBar />
      <TabRow />
      <Ribbon />
      <AddressRow />
      <div className="flex min-h-0 flex-1">
        <NavPane />
        <ScrollTrack />
        <main className="flex-1 pt-[15px] text-center text-[11px] leading-4 text-[#6d6d6d]">Working on it...</main>
      </div>
      <StatusBar />
    </section>
  );
}

/* ---------- taskbar ---------- */

function SearchArt() {
  return (
    <svg viewBox="0 0 80 38" className="h-[38px] w-20 shrink-0">
      <ellipse cx="42" cy="26" rx="36" ry="24" fill="url(#skyGlow)" />
      {[
        [10, 27, '#2f6ea8'], [18, 21, '#5aa05a'], [27, 15, '#2f6ea8'], [24, 11, '#e0c84a'], [36, 11, '#3a3fa8'], [38, 5, '#7fd0e8'],
        [46, 19, '#3f4fb0'], [56, 13, '#2f6ea8'], [54, 20, '#e0c84a'], [64, 16, '#2f6ea8'], [63, 23, '#3f6fb8'], [71, 21, '#7fb8d8'],
      ].map(([x, y, c], i) => (
        <circle key={i} cx={x} cy={y} r="1.300" fill={String(c)} />
      ))}
      <path d="M0 38l10-8 7-2 6 2 10-4 12-2 8-2 6 2 8 5 13 6v3z" fill="#5b4a6a" />
      <path d="M0 38l10-8 7-2 6 4 8 6zM45 24l8-2 6 2 8 5 13 6v3H52z" fill="#33335a" />
      <path d="M26 33l12-7 8 12H30z" fill="#8a6058" />
    </svg>
  );
}

function Taskbar() {
  return (
    <footer className="flex h-10 shrink-0 bg-linear-to-r from-[#001923] via-[#00121f] to-[#000617] font-['Open_Sans','Noto_Sans',sans-serif] text-white">
      <button aria-label="Start" className="flex w-12 items-center justify-center">
        <svg viewBox="0 0 16 16" className="h-4 w-4">
          <path d="M0 2.200L7 1.200V7.500H0zM8 1.100L16 0v7.500H8zM0 8.500h7v6.300L0 13.800zM8 8.500h8V16L8 14.900z" fill="#fff" />
        </svg>
      </button>
      <label className="flex w-72 items-center border border-[#c8c8c8] bg-[#f0f0f0] pl-3">
        <svg viewBox="0 0 16 16" className="h-4 w-4 shrink-0">
          <circle cx="10" cy="6" r="5.300" fill="none" stroke="#111" strokeWidth="1.200" />
          <path d="M6 10L.5 15.500" stroke="#111" strokeWidth="1.300" />
        </svg>
        <input aria-label="Type here to search" placeholder="Type here to search" className="min-w-0 flex-1 bg-transparent pl-2.5 text-sm text-[#333] outline-none placeholder:text-[#3a3a3a]" />
        <SearchArt />
      </label>
      <button aria-label="Task View" className="flex w-12 items-center justify-center">
        <svg viewBox="0 0 18 18" className="h-[18px] w-[18px]" fill="none" stroke="#fff" strokeWidth="1.100">
          <path d="M1.500 1v2.500h9V1M1.500 17v-2.500h9V17M1.500 6h9v6h-9zM15.500 1v4M15.500 9.500V17" />
          <path d="M14 6h3v2.500h-3z" fill="#fff" stroke="none" />
        </svg>
      </button>
      <button aria-label="Microsoft Edge" className="flex w-[52px] items-center justify-center">
        <svg viewBox="0 0 256 256" className="h-6 w-6"><EdgeShape /></svg>
      </button>
      <button aria-label="File Explorer" className="flex w-12 items-center justify-center border-b-3 border-[#76b9ed] bg-linear-to-r from-[#36454f] from-92% to-[#26343e] to-92% pt-[3px]">
        <svg viewBox="0 0 24 24" className="h-6 w-6">
          <path d="M1 4h8l1.500 2H23v14H1z" fill="#f5b83d" />
          <path d="M1 8h22v12H1z" fill="#ffd56b" />
          <path d="M5 21v-7c0-1 .5-1.500 1.500-1.500h11c1 0 1.500.5 1.500 1.500v7h-4v-3H9v3z" fill="#3f93d6" />
        </svg>
      </button>
      <button aria-label="Firefox" className="flex w-[50px] items-center justify-center">
        <svg viewBox="0 0 48 48" className="h-6 w-6"><FirefoxShape /></svg>
      </button>
      <button aria-label="Run" className="ml-1 flex w-10 items-center justify-center border-b-3 border-[#76b9ed] pt-[3px]">
        <RunIcon className="h-4 w-[22px]" />
      </button>
      <div className="ml-auto flex items-center">
        <button aria-label="Show hidden icons" className="flex w-6 justify-center">
          <svg viewBox="0 0 12 12" className="h-3 w-3"><path d="M.5 9L6 3.500 11.500 9" fill="none" stroke="#fff" strokeWidth="1.200" /></svg>
        </button>
        <button aria-label="Meet Now" className="flex w-6 justify-center">
          <svg viewBox="0 0 16 16" className="h-4 w-4" fill="none" stroke="#fff" strokeWidth="1.100">
            <rect x="3" y="4.500" width="7" height="7" rx="1.500" />
            <path d="M10 7.500l3-1.500v5l-3-1.500M4.500 2c2-1.700 5-1.700 7 0M4.500 14c2 1.700 5 1.700 7 0" />
          </svg>
        </button>
        <button aria-label="Network" className="flex w-6 justify-center">
          <svg viewBox="0 0 16 16" className="h-4 w-4" fill="none" stroke="#fff" strokeWidth="1.100">
            <path d="M5 3.500h10.500v8H4.500V7M10 11.500v3M6.500 14.500h7M.5 1.500h4v3.500h-4zM2.500 5v9h3" />
          </svg>
        </button>
        <button aria-label="Volume" className="flex w-6 justify-center">
          <svg viewBox="0 0 18 16" className="h-4 w-[18px]" fill="none" stroke="#fff" strokeWidth="1.100">
            <path d="M1 5.500h2.500L7.500 2v12l-4-3.500H1zM9.500 6c1 1.200 1 2.800 0 4M12 4.200c2 2.300 2 5.300 0 7.600M14.300 2.500c3 3.300 3 7.700 0 11" />
          </svg>
        </button>
        <div className="w-16 text-center text-[11px] leading-[18px]">
          <div>8:20 PM</div>
          <div>2/3/2025</div>
        </div>
        <button aria-label="Notifications" className="flex w-10 justify-center">
          <svg viewBox="0 0 16 16" className="h-4 w-4" fill="none" stroke="#fff" strokeWidth="1.100">
            <path d="M.5 1.500h15v11H10L8 14.500l-2-2H.5z" />
          </svg>
        </button>
        <div className="ml-2 h-10 w-[5px] border-l border-[#3c4656]" />
      </div>
    </footer>
  );
}

export default function App() {
  return (
    <div className="flex h-screen w-full flex-col overflow-hidden font-['Open_Sans','Noto_Sans',sans-serif]">
      <Gradients />
      <div className="relative min-h-0 flex-1 overflow-hidden bg-[radial-gradient(ellipse_180px_280px_at_82%_42%,rgba(0,90,245,0.7),transparent),linear-gradient(97deg,#00a8fb_0%,#00b2ff_25%,#0093ee_48%,#0060dc_72%,#0044c6_87%,#0038b4_100%)]">
        <DesktopGrid />
        <BackWindow />
        <RunDialog />
        <ExplorerWindow />
        <Watermark />
      </div>
      <Taskbar />
    </div>
  );
}
